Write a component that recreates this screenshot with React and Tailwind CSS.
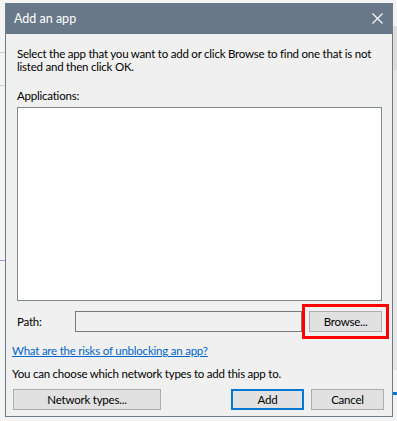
import React from "react";

const font = { fontFamily: 'Lato, "Noto Sans", "Liberation Sans", sans-serif' };

export default function App() {
  return (
    <div
      className="relative w-[397px] h-[421px] overflow-hidden bg-[#f4f4f4] text-[11.5px] tracking-[-0.22px] text-black"
      style={font}
    >
      {/* background window fragments */}
      <div className="absolute left-0 top-[52px] w-[5px] h-px bg-[#d0d0d0]" />
      <div className="absolute left-0 top-[85px] w-[5px] h-px bg-[#d0d0d0]" />
      <div className="absolute left-0 top-[260px] w-[5px] h-px bg-[#9a9ac8]" />
      <div className="absolute right-0 top-[26px] w-[4px] h-[44px] bg-[#dcdcdc]" />
      <div className="absolute right-0 top-[70px] w-[4px] h-[300px] bg-[#e6e6e6]" />
      <div className="absolute right-0 top-[392px] w-[4px] h-[3px] bg-[#0078d7]" />

      {/* dialog */}
      <div className="absolute left-[5px] top-[3px] w-[388px] h-[414px] border border-[#6c7b8d] bg-[#f0f0f0] flex flex-col">
        <div className="h-[30px] bg-[#687889] flex items-center justify-between pl-[8px] pr-[9px] shrink-0">
          <span className="text-white text-[12.5px] tracking-normal leading-none">Add an app</span>
          <svg width="11" height="11" viewBox="0 0 11 11" className="mt-[-1px]">
            <path d="M0.5 0.5 L10.5 10.5 M10.5 0.5 L0.5 10.5" stroke="white" strokeWidth="1.1" />
          </svg>
        </div>

        <div className="flex flex-col pl-[11px] pr-[10px]">
          <p className="mt-[13px] leading-[13px] whitespace-nowrap">
            Select the app that you want to add or click Browse to find one that is not
            <br />
            listed and then click OK.
          </p>
          <p className="mt-[16px] leading-[14px] whitespace-nowrap">Applications:</p>
          <div className="mt-[4px] w-[365px] h-[194px] bg-white border border-[#828790]" />
          <div className="mt-[10px] flex items-center h-[21px]">
            <span className="w-[58px]">Path:</span>
            <div className="w-[228px] h-[21px] bg-[#f0f0f0] border border-[#7a7a7a]" />
            <div className="ml-[7px] w-[73px] h-[21px] bg-[#e1e1e1] border border-[#adadad] flex items-center justify-center outline-[3px] outline-solid outline-[#ff0000] outline-offset-[4px] whitespace-nowrap">
              Browse...
            </div>
          </div>
        </div>

        <div className="flex flex-col pl-[6px] pr-[8px]">
          <a className="mt-[12px] leading-[14px] text-[#0066cc] underline whitespace-nowrap">
            What are the risks of unblocking an app?
          </a>
          <p className="mt-[9px] leading-[14px] whitespace-nowrap">
            You can choose which network types to add this app to.
          </p>
          <div className="mt-[8px] flex items-center">
            <div className="ml-[1px] w-[148px] h-[21px] bg-[#e1e1e1] border border-[#adadad] flex items-center justify-center whitespace-nowrap">
              Network types...
            </div>
            <div className="ml-auto w-[73px] h-[21px] bg-[#e1e1e1] border-2 border-[#0078d7] flex items-center justify-center">
              Add
            </div>
            <div className="ml-[7px] w-[73px] h-[21px] bg-[#e1e1e1] border border-[#adadad] flex items-center justify-center">
              Cancel
            </div>
          </div>
        </div>
      </div>
    </div>
  );
}
